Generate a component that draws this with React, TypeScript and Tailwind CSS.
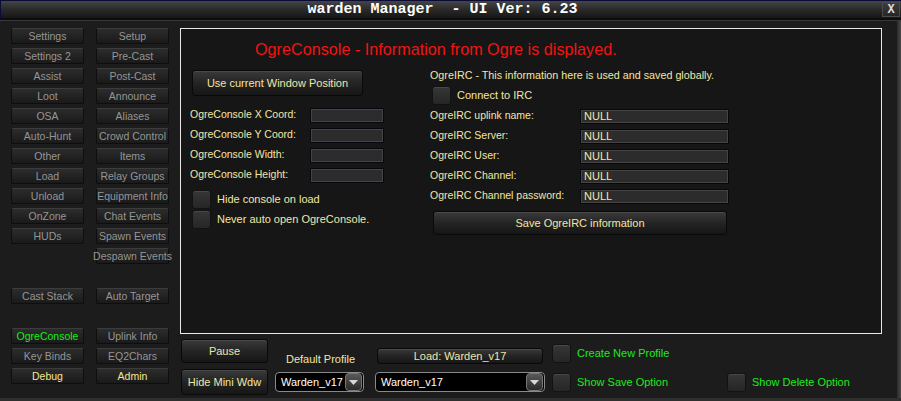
import React from "react";

type NavCell = { label: string; tone?: "green" | "yellow" } | null;

const NAV_ROWS: [NavCell, NavCell][] = [
  [{ label: "Settings" }, { label: "Setup" }],
  [{ label: "Settings 2" }, { label: "Pre-Cast" }],
  [{ label: "Assist" }, { label: "Post-Cast" }],
  [{ label: "Loot" }, { label: "Announce" }],
  [{ label: "OSA" }, { label: "Aliases" }],
  [{ label: "Auto-Hunt" }, { label: "Crowd Control" }],
  [{ label: "Other" }, { label: "Items" }],
  [{ label: "Load" }, { label: "Relay Groups" }],
  [{ label: "Unload" }, { label: "Equipment Info" }],
  [{ label: "OnZone" }, { label: "Chat Events" }],
  [{ label: "HUDs" }, { label: "Spawn Events" }],
  [null, { label: "Despawn Events" }],
  [null, null],
  [{ label: "Cast Stack" }, { label: "Auto Target" }],
  [null, null],
  [{ label: "OgreConsole", tone: "green" }, { label: "Uplink Info" }],
  [{ label: "Key Binds" }, { label: "EQ2Chars" }],
  [{ label: "Debug", tone: "yellow" }, { label: "Admin", tone: "yellow" }],
];

function NavButton({ cell }: { cell: NavCell }) {
  if (!cell) return <div />;
  const color =
    cell.tone === "green" ? "text-[#14f014]" : cell.tone === "yellow" ? "text-[#f6e68e]" : "text-[#969696]";
  return (
    <div
      className={`flex items-center justify-center whitespace-nowrap rounded-[2px] border border-[#0e0e0e] border-t-[#3c3c3c] bg-gradient-to-b from-[#2c2c2c] to-[#1a1a1a] text-[10.5px] leading-none ${color}`}
    >
      {cell.label}
    </div>
  );
}

function GameButton({ className, children }: { className: string; children: React.ReactNode }) {
  return (
    <div
      className={`flex items-center justify-center rounded-[3px] border border-[#090909] bg-gradient-to-b from-[#3a3a3a] via-[#242424] to-[#161616] text-[11px] text-[#f2e6a6] shadow-[inset_0_1px_0_#4a4a4a] ${className}`}
    >
      {children}
    </div>
  );
}

function Check({ className = "" }: { className?: string }) {
  return (
    <div
      className={`h-[19px] w-[19px] shrink-0 rounded-[3px] border border-[#121212] bg-gradient-to-b from-[#363636] to-[#262626] shadow-[inset_0_1px_0_#484848] ${className}`}
    />
  );
}

function Field({ className, value }: { className: string; value?: string }) {
  return (
    <div
      className={`flex items-center border border-[#07070f] bg-[#2c2c2c] pl-[3px] text-[11px] leading-none text-[#f6e9a8] shadow-[inset_0_0_0_1px_#444] ${className}`}
    >
      {value}
    </div>
  );
}

function Dropdown({ className, value }: { className: string; value: string }) {
  return (
    <div
      className={`flex h-[20px] items-center rounded-[4px] border border-[#8a8a8a] bg-black pl-[5px] pr-[1px] text-[11px] text-white ${className}`}
    >
      <span className="flex-1 overflow-hidden whitespace-nowrap">{value}</span>
      <div className="flex h-[18px] w-[17px] shrink-0 items-center justify-center rounded-[4px] border border-[#777] bg-gradient-to-b from-[#5a5a5a] to-[#2a2a2a]">
        <svg width="9" height="5" viewBox="0 0 9 5">
          <path d="M0 0 H9 L4.5 5 Z" fill="#d8d8d8" />
        </svg>
      </div>
    </div>
  );
}

function Row({ label, labelW, children }: { label: string; labelW: string; children: React.ReactNode }) {
  return (
    <div className="flex h-[20px] items-center">
      <span className={`${labelW} whitespace-nowrap text-[10.5px] text-[#f2e6a6]`}>{label}</span>
      {children}
    </div>
  );
}

export default function App() {
  return (
    <div className="flex h-[401px] w-[901px] flex-col overflow-hidden bg-[#1c1c1c] font-['Liberation_Sans',Arial,sans-serif]">
      {/* title bar */}
      <div className="flex h-[20px] items-center border-l border-t border-[#0b0b3a] border-b-2 border-b-[#0c0c0c] bg-gradient-to-b from-[#454545] via-[#2a2a2a] to-[#161616]">
        <div className="flex flex-1 justify-center pl-[2px] font-['Liberation_Mono',monospace] text-[15px] font-bold leading-none text-white whitespace-pre">
          warden Manager  - UI Ver: 6.23
        </div>
        <div className="mr-[1px] flex h-[15px] w-[18px] items-center justify-center border border-[#4a4a4a] bg-gradient-to-b from-[#3d3d3d] to-[#262626] font-['Liberation_Mono',monospace] text-[12px] font-bold text-[#dcdcdc]">
          X
        </div>
      </div>

      <div className="flex flex-1 border-t border-[#383838]">
        {/* left nav */}
        <nav className="w-[180px] shrink-0 pl-[11px] pt-[7px]">
          <div className="grid grid-cols-[73px_73px] auto-rows-[16px] gap-x-[12px] gap-y-[4px]">
            {NAV_ROWS.flatMap((row, i) => [
              <NavButton key={`${i}a`} cell={row[0]} />,
              <NavButton key={`${i}b`} cell={row[1]} />,
            ])}
          </div>
        </nav>

        <div className="flex flex-col">
          {/* main panel */}
          <section className="mt-[7px] h-[306px] w-[702px] border border-[#e8e8e8] bg-[#161616] pl-[9px] pt-[11px]">
            <h1 className="ml-[65px] h-[18px] text-[16.2px] leading-[18px] text-[#f01414]">
              OgreConsole - Information from Ogre is displayed.
            </h1>

            <div className="mt-[7px] flex">
              {/* console column */}
              <div className="w-[240px] pt-[5px]">
                <GameButton className="ml-[2px] h-[26px] w-[171px]">Use current Window Position</GameButton>
                <div className="mt-[9px]">
                  <Row label="OgreConsole X Coord:" labelW="w-[120px]">
                    <Field className="h-[15px] w-[74px]" />
                  </Row>
                  <Row label="OgreConsole Y Coord:" labelW="w-[120px]">
                    <Field className="h-[15px] w-[74px]" />
                  </Row>
                  <Row label="OgreConsole Width:" labelW="w-[120px]">
                    <Field className="h-[15px] w-[74px]" />
                  </Row>
                  <Row label="OgreConsole Height:" labelW="w-[120px]">
                    <Field className="h-[15px] w-[74px]" />
                  </Row>
                </div>
                <div className="mt-[4px] flex h-[20px] items-center gap-[6px] pl-[2px]">
                  <Check />
                  <span className="text-[11px] text-[#f2e6a6]">Hide console on load</span>
                </div>
                <div className="flex h-[20px] items-center gap-[6px] pl-[2px]">
                  <Check />
                  <span className="text-[11px] text-[#f2e6a6]">Never auto open OgreConsole.</span>
                </div>
              </div>

              {/* irc column */}
              <div className="w-[300px]">
                <div className="flex h-[20px] items-center whitespace-nowrap text-[10.75px] text-[#f2e6a6]">
                  OgreIRC - This information here is used and saved globally.
                </div>
                <div className="flex h-[20px] items-center gap-[6px] pl-[2px]">
                  <Check />
                  <span className="text-[11px] text-[#f2e6a6]">Connect to IRC</span>
                </div>
                <div className="mt-[1px]">
                  <Row label="OgreIRC uplink name:" labelW="w-[150px]">
                    <Field className="h-[15px] w-[149px]" value="NULL" />
                  </Row>
                  <Row label="OgreIRC Server:" labelW="w-[150px]">
                    <Field className="h-[15px] w-[149px]" value="NULL" />
                  </Row>
                  <Row label="OgreIRC User:" labelW="w-[150px]">
                    <Field className="h-[15px] w-[149px]" value="NULL" />
                  </Row>
                  <Row label="OgreIRC Channel:" labelW="w-[150px]">
                    <Field className="h-[15px] w-[149px]" value="NULL" />
                  </Row>
                  <Row label="OgreIRC Channel password:" labelW="w-[150px]">
                    <Field className="h-[15px] w-[149px]" value="NULL" />
                  </Row>
                </div>
                <GameButton className="ml-[3px] mt-[5px] h-[24px] w-[294px]">Save OgreIRC information</GameButton>
              </div>
            </div>
          </section>

          {/* bottom bar */}
          <div className="flex">
            <div className="ml-[1px] flex w-[87px] flex-col pt-[5px]">
              <GameButton className="h-[24px] w-[87px]">Pause</GameButton>
              <GameButton className="mt-[6px] h-[26px] w-[87px]">Hide Mini Wdw</GameButton>
            </div>
            <div className="ml-[7px] flex w-[89px] flex-col pt-[16px]">
              <div className="flex h-[18px] items-center justify-center pl-[2px] text-[11px] text-[#f2e6a6]">
                Default Profile
              </div>
              <Dropdown className="mt-[4px] w-[89px]" value="Warden_v17" />
            </div>
            <div className="ml-[11px] flex w-[170px] flex-col pt-[14px]">
              <GameButton className="ml-[2px] h-[16px] w-[166px]">Load: Warden_v17</GameButton>
              <Dropdown className="mt-[8px] w-[170px]" value="Warden_v17" />
            </div>
            <div className="ml-[7px] flex flex-col pt-[10px]">
              <div className="flex items-center gap-[6px]">
                <Check />
                <span className="text-[11px] text-[#1cea1c]">Create New Profile</span>
              </div>
              <div className="mt-[10px] flex items-center">
                <div className="flex w-[175px] items-center gap-[6px]">
                  <Check />
                  <span className="text-[11px] text-[#1cea1c]">Show Save Option</span>
                </div>
                <div className="flex items-center gap-[6px]">
                  <Check />
                  <span className="text-[11px] text-[#1cea1c]">Show Delete Option</span>
                </div>
              </div>
            </div>
          </div>
        </div>

        {/* right window edge */}
        <div className="ml-auto w-[4px] bg-gradient-to-r from-[#2a2a2a] to-[#4a4a4a]" />
      </div>
      <div className="h-[3px] bg-[#2e2e2e]" />
    </div>
  );
}
